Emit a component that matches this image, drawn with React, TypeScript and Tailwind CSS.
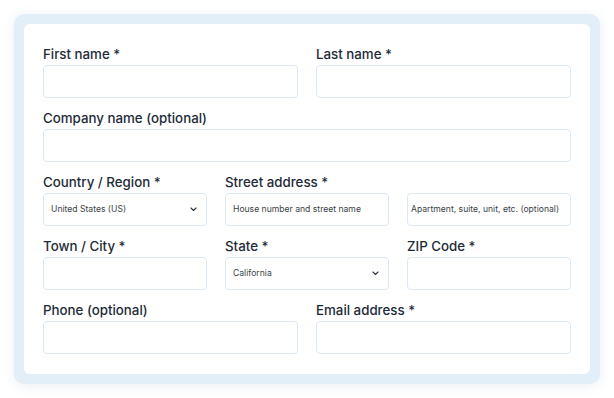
import React from 'react';

const Label = ({ children, className = '' }: { children: React.ReactNode; className?: string }) => (
  <div className={`h-[20px] mb-[2px] pt-px text-[13.3px] leading-[21px] font-medium text-[#1d2b38] ${className}`}>
    {children}
  </div>
);

const Input = ({ text, className = '' }: { text?: string; className?: string }) => (
  <div
    className={`h-[33px] rounded-[4px] border border-[#dbe8f5] bg-white flex items-center text-[8.6px] text-[#3a3f45] ${className}`}
  >
    {text}
  </div>
);

const Chevron = () => (
  <svg width="7" height="5" viewBox="0 0 7 5" fill="none">
    <polyline points="1,1 3.5,3.5 6,1" stroke="#2b3540" strokeWidth="1.1" strokeLinecap="round" strokeLinejoin="round" />
  </svg>
);

const Select = ({ value }: { value: string }) => (
  <div className="h-[33px] rounded-[4px] border border-[#dbe8f5] bg-white flex items-center justify-between pl-[7px] pr-[9px] text-[8.6px] text-[#3a3f45]">
    <span>{value}</span>
    <Chevron />
  </div>
);

const Field = ({ label, children }: { label: string; children: React.ReactNode }) => (
  <div>
    <Label>{label}</Label>
    {children}
  </div>
);

export default function App() {
  return (
    <div className="w-[614px] h-[398px] bg-white p-[14px]" style={{ fontFamily: 'Inter, "Liberation Sans", sans-serif' }}>
      <div className="rounded-[10px] bg-[#e3eff8] p-[10px] shadow-[0_2px_12px_rgba(120,150,180,0.15)]">
        <div className="rounded-[6px] bg-white px-[19px] pt-[19px] pb-[20px] flex flex-col gap-[9px]">
          <div className="grid grid-cols-2 gap-x-[18px]">
            <Field label="First name *">
              <Input />
            </Field>
            <Field label="Last name *">
              <Input />
            </Field>
          </div>

          <Field label="Company name (optional)">
            <Input />
          </Field>

          <div className="grid grid-cols-3 gap-x-[18px]">
            <Label>Country / Region *</Label>
            <Label className="col-span-2">Street address *</Label>
            <Select value="United States (US)" />
            <Input text="House number and street name" className="pl-[7px]" />
            <Input text="Apartment, suite, unit, etc. (optional)" className="pl-[3px]" />
          </div>

          <div className="grid grid-cols-3 gap-x-[18px]">
            <Field label="Town / City *">
              <Input />
            </Field>
            <Field label="State *">
              <Select value="California" />
            </Field>
            <Field label="ZIP Code *">
              <Input />
            </Field>
          </div>

          <div className="grid grid-cols-2 gap-x-[18px]">
            <Field label="Phone (optional)">
              <Input />
            </Field>
            <Field label="Email address *">
              <Input />
            </Field>
          </div>
        </div>
      </div>
    </div>
  );
}
